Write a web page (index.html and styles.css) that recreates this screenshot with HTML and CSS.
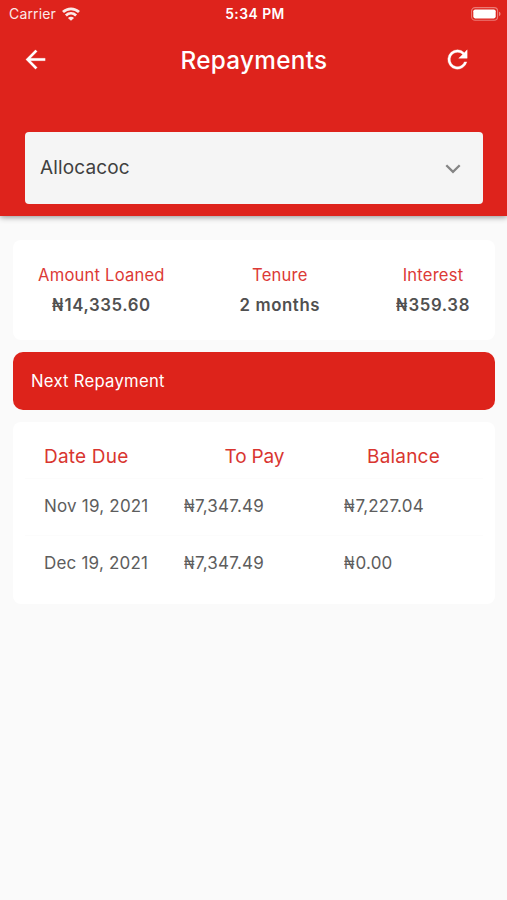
FILE: index.html
```html
<!DOCTYPE html>
<html lang="en">
<head>
<meta charset="utf-8">
<meta name="viewport" content="width=device-width, initial-scale=1">
<title>Repayments</title>
<link rel="stylesheet" href="styles.css">
</head>
<body>
<header class="header">
  <div class="status">
    <div class="carrier"><span>Carrier</span>
      <svg class="wifi" viewBox="0 0 18 14" fill="none" stroke="currentColor" stroke-width="2.8"><path d="M1 5.100C5.600.700 12.400.700 17 5.100M3.900 8.500c3-2.800 7.200-2.800 10.200 0"/><path d="M9 13.800 5.900 10.900c1.700-1.600 4.500-1.600 6.200 0Z" fill="currentColor" stroke="none"/></svg>
    </div>
    <span class="clock">5:34 PM</span>
    <svg class="battery" viewBox="0 0 30 14"><rect x=".6" y=".6" width="26" height="12.6" rx="3.5" fill="none" stroke="#fff" stroke-opacity=".4" stroke-width="1.1"/><rect x="2.3" y="2.4" width="22.4" height="9" rx="1.8" fill="#fff"/><path d="M28 4.800c2 .700 2 3.600 0 4.300Z" fill="#fff" fill-opacity=".45"/></svg>
  </div>
  <div class="appbar">
    <svg class="icon" viewBox="0 0 24 24" fill="currentColor" stroke="currentColor" stroke-width=".2"><path d="M20 11H7.830l5.590-5.590L12 4l-8 8 8 8 1.410-1.410L7.830 13H20v-2z"/></svg>
    <h1 class="title">Repayments</h1>
    <svg class="icon" viewBox="0 0 24 24" fill="currentColor" stroke="currentColor" stroke-width=".3"><path d="M17.650 6.350A7.958 7.958 0 0 0 12 4a8 8 0 1 0 7.730 10h-2.080A6 6 0 1 1 12 6c1.660 0 3.140.690 4.220 1.780L13 11h7V4l-2.350 2.350z"/></svg>
  </div>
  <div class="select">
    <span class="select-label">Allocacoc</span>
    <svg class="chevron" viewBox="0 0 16 10" fill="none" stroke="currentColor" stroke-width="2.3"><path d="m1.300 1.300 6.700 6.600 6.700-6.600"/></svg>
  </div>
</header>
<main class="content">
  <section class="summary">
    <div class="stat"><span class="stat-name">Amount Loaned</span><strong class="stat-value"><span class="naira">₦</span>14,335.60</strong></div>
    <div class="stat tenure"><span class="stat-name">Tenure</span><strong class="stat-value">2 months</strong></div>
    <div class="stat"><span class="stat-name">Interest</span><strong class="stat-value"><span class="naira">₦</span>359.38</strong></div>
  </section>
  <div class="banner">Next Repayment</div>
  <section class="schedule">
    <div class="row head"><span>Date Due</span><span class="pay">To Pay</span><span class="balance">Balance</span></div>
    <div class="row"><span>Nov 19, 2021</span><span><span class="naira">₦</span>7,347.49</span><span><span class="naira">₦</span>7,227.04</span></div>
    <div class="row"><span>Dec 19, 2021</span><span><span class="naira">₦</span>7,347.49</span><span><span class="naira">₦</span>0.00</span></div>
  </section>
</main>
</body>
</html>
```
FILE: styles.css
```css
* { box-sizing: border-box; }
body {
  margin: 0;
  min-height: 900px;
  background: #fafafa;
  color: #555;
  font-family: Inter, "Liberation Sans", sans-serif;
}
.header {
  height: 216px;
  background: #de231c;
  color: #fff;
  box-shadow: 0 1px 6px rgba(0, 0, 0, .45);
}
.status {
  display: grid;
  grid-template-columns: 1fr auto 1fr;
  align-items: center;
  height: 27px;
  padding: 0 6px 0 9px;
  font-size: 14px;
  line-height: 25px;
}
.carrier { display: flex; align-items: center; gap: 6px; letter-spacing: .15px; opacity: .9; }
.wifi { width: 18px; height: 14px; }
.clock { padding-top: 1px; font-size: 13.8px; font-weight: 600; letter-spacing: .5px; }
.battery { width: 30px; height: 14px; justify-self: end; }
.appbar {
  display: grid;
  grid-template-columns: 29px 1fr 29px;
  align-items: center;
  height: 65px;
  padding: 0 35px 0 21px;
}
.icon { width: 29px; height: 29px; }
.title {
  margin: 0;
  padding-left: 15px;
  font-size: 24.3px;
  font-weight: 500;
  line-height: 32px;
  letter-spacing: .3px;
  text-align: center;
}
.select {
  display: flex;
  align-items: center;
  justify-content: space-between;
  height: 72px;
  margin: 40px 24px 0 25px;
  padding: 0 22px 2px 15px;
  border-radius: 4px;
  background: #f5f5f5;
  color: #404040;
  font-size: 19px;
  letter-spacing: .15px;
}
.chevron { width: 16px; height: 10px; margin-top: 3px; color: #858585; }
.content { padding: 24px 12px 0 13px; }
.summary {
  display: flex;
  justify-content: space-between;
  height: 100px;
  padding: 24px 25px 0;
  border-radius: 8px;
  background: #fff;
}
.stat { display: flex; flex-direction: column; align-items: center; }
.tenure { margin-right: 1px; }
.stat-name { color: #dc3a36; font-size: 16.6px; line-height: 22px; letter-spacing: .2px; }
.stat-value {
  margin-top: 8px;
  color: #505050;
  font-size: 16.8px;
  font-weight: 600;
  line-height: 22px;
  letter-spacing: .6px;
}
.naira {
  display: inline-block;
  width: 11.5px;
  letter-spacing: 0;
  transform: scaleX(.8);
  transform-origin: left;
}
.stat-value .naira { width: 12.5px; transform: scaleX(.88); }
.banner {
  height: 58px;
  margin-top: 12px;
  padding-left: 18px;
  border-radius: 10px;
  background: #dd231b;
  color: #fff;
  font-size: 16.7px;
  line-height: 58px;
  letter-spacing: .25px;
}
.schedule {
  height: 182px;
  margin-top: 12px;
  padding: 6px 12px 0;
  border-radius: 8px;
  background: #fff;
}
.row {
  display: grid;
  grid-template-columns: 139.5px 160.5px 1fr;
  height: 57px;
  padding-left: 19px;
  border-top: 1px solid #fcfcfc;
  color: #5d5d5d;
  font-size: 17px;
  line-height: 54px;
  letter-spacing: .2px;
}
.head { height: 50px; border: 0; color: #d93630; font-size: 19px; line-height: 57px; }
.pay { padding-left: 41px; letter-spacing: -.15px; }
.balance { padding-left: 23px; }
```
